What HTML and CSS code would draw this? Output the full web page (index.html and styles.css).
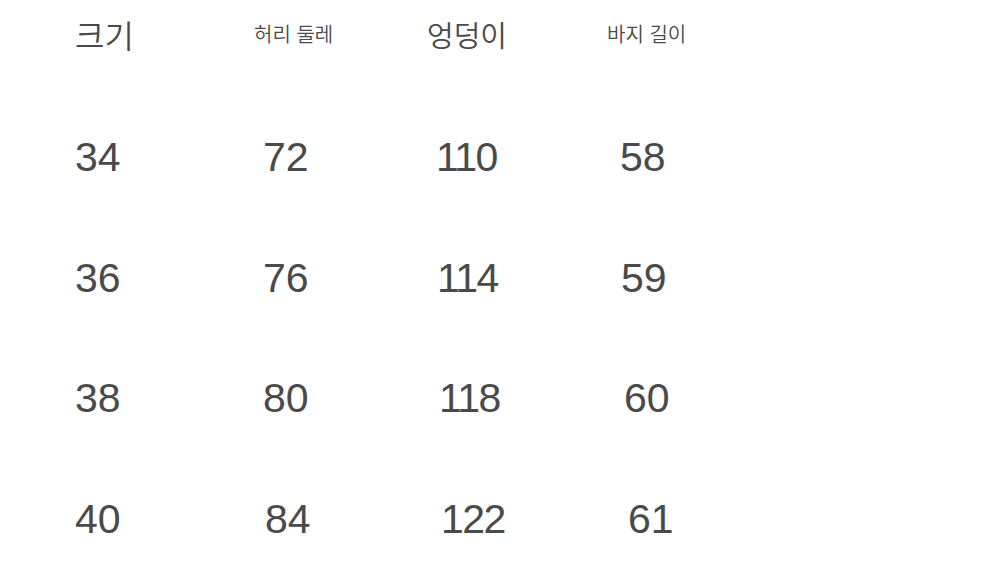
FILE: index.html
```html
<!DOCTYPE html>
<html lang="ko">
<head>
<meta charset="utf-8">
<link rel="stylesheet" href="styles.css">
</head>
<body>
<div class="chart">
  <div class="head h-size">크기</div>
  <div class="head h-small">허리 둘레</div>
  <div class="head h-hip">엉덩이</div>
  <div class="head h-small">바지 길이</div>

  <div class="num p3">34</div>
  <div class="num p9">72</div>
  <div class="num wide p9">110</div>
  <div class="num p13">58</div>

  <div class="num p3">36</div>
  <div class="num p9">76</div>
  <div class="num wide p10">114</div>
  <div class="num p14">59</div>

  <div class="num p3">38</div>
  <div class="num p9">80</div>
  <div class="num wide p12">118</div>
  <div class="num p17">60</div>

  <div class="num p3">40</div>
  <div class="num p11">84</div>
  <div class="num wide p14">122</div>
  <div class="num p21">61</div>
</div>
</body>
</html>
```

FILE: styles.css
```css
html, body {
  margin: 0;
  padding: 0;
  background: #ffffff;
}
body {
  width: 1000px;
  height: 562px;
  overflow: hidden;
  color: #4a4a4a;
}
.chart {
  display: grid;
  grid-template-columns: 182px 173px 180px 200px;
  grid-template-rows: 97px repeat(4, 120.5px);
  padding-left: 72px;
}
.head {
  font-family: "Noto Sans CJK KR", "Liberation Sans", sans-serif;
  font-weight: 350;
  line-height: 68px;
  height: 68px;
  align-self: start;
  white-space: nowrap;
}
.h-size {
  font-size: 32px;
  margin-left: 3px;
}
.h-hip {
  font-size: 29px;
}
.h-small {
  font-size: 20px;
}
.num {
  font-family: "Liberation Sans", Arial, sans-serif;
  font-size: 41px;
  line-height: 120.5px;
}
.wide {
  letter-spacing: -1.5px;
}
.p3 { padding-left: 3px; }
.p9 { padding-left: 9px; }
.p10 { padding-left: 10px; }
.p11 { padding-left: 11px; }
.p12 { padding-left: 12px; }
.p13 { padding-left: 13px; }
.p14 { padding-left: 14px; }
.p17 { padding-left: 17px; }
.p21 { padding-left: 21px; }
```
